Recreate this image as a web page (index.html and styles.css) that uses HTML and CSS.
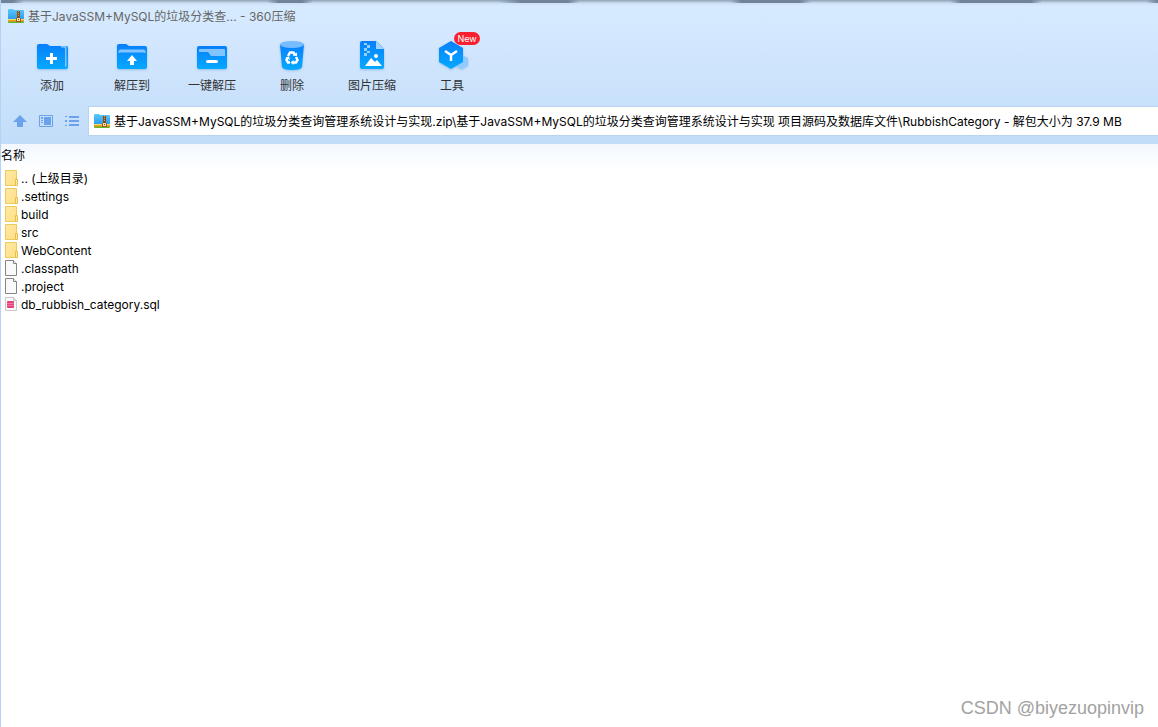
FILE: index.html
```html
<!DOCTYPE html>
<html lang="zh-CN">
<head>
<meta charset="utf-8">
<meta name="viewport" content="width=device-width, initial-scale=1">
<title>360压缩</title>
<link rel="stylesheet" href="styles.css">
</head>
<body>
<svg class="defs" aria-hidden="true">
  <defs>
    <linearGradient id="blue" x1="0" y1="0" x2="0" y2="1"><stop offset="0" stop-color="#087ffb"/><stop offset="1" stop-color="#05a9ff"/></linearGradient>
    <linearGradient id="sheet" x1="0" y1="0" x2="1" y2="1"><stop offset="0" stop-color="#ffe9a4"/><stop offset="1" stop-color="#ffdf85"/></linearGradient>
    <linearGradient id="zipblue" x1="0" y1="0" x2="0" y2="1"><stop offset="0" stop-color="#5cc8fa"/><stop offset="1" stop-color="#279bed"/></linearGradient>
  </defs>
  <symbol id="zip" viewBox="0 0 16 14">
    <path d="M0 1q0-1 1-1h4l1 1h9q1 0 1 1v9H0z" fill="url(#zipblue)"/>
    <path d="M0 10h16v1H0z" fill="#f0dc70"/><path d="M0 11h16v2H0z" fill="#f59a1d"/><path d="M0 12.500h16V13q0 1-1 1H1q-1 0-1-1z" fill="#63b52e"/>
    <path d="M9 2h3v8H9z" fill="#8a4b1a"/><path d="M10 2h1v1h-1zm0 2h1v1h-1zm0 2h1v1h-1z" fill="#e0a050"/>
    <path d="M8 9h5v4H8z" fill="#9a5a20"/><path d="M9 9h3v3H9z" fill="#ffe6a0"/><path d="M10 10h1v1h-1z" fill="#74451c"/>
  </symbol>
  <symbol id="folder" viewBox="0 1 14 18">
    <path d="M1.500 1.500h11v15h-11z" fill="url(#sheet)" stroke="#eccb58"/>
    <path d="M11.500 10.500h2v6h-2z" fill="#ffe9a4" stroke="#e6c04a"/>
  </symbol>
  <symbol id="file" viewBox="0 1 14 18">
    <path d="M1.500 1.500h8l3 3v12h-11z" fill="#fafafa" stroke="#858585"/><path d="M9.500 1.500v3h3" fill="#fff" stroke="#858585"/>
  </symbol>
</svg>
<div class="window">
  <header class="chrome">
    <div class="shadows" aria-hidden="true"></div>
    <div class="titlebar">
      <svg class="zip"><use href="#zip"/></svg>
      <h1>基于JavaSSM+MySQL的垃圾分类查... - 360压缩</h1>
    </div>
    <nav class="toolbar" aria-label="工具栏">
      <button class="tool"><svg viewBox="0 0 32 32"><path d="M1 6q0-2 2-2h8l3 2h16q2 0 2 2v19q0 2-2 2H3q-2 0-2-2z" fill="url(#blue)"/><path d="M25 6h4q1.500 0 1.500 1.500V26q0 1-1.500 1V9q0-1.500-1.500-1.500H25z" fill="#82c4ff"/><path d="M10 18.500h11M15.500 13v11" stroke="#fff" stroke-width="3"/></svg>添加</button>
      <button class="tool"><svg viewBox="0 0 32 32"><path d="M1 6q0-2 2-2h7l3 2h16q2 0 2 2v19q0 2-2 2H3q-2 0-2-2z" fill="url(#blue)"/><path d="M3 13v-2q0-1 1-1h24q1 0 1 1v2q0-1-1-1H4q-1 0-1 1z" fill="#82c4ff" stroke="#82c4ff"/><path d="M16 15l5 6h-3v4h-4v-4h-3z" fill="#fff"/></svg>解压到</button>
      <button class="tool"><svg viewBox="0 0 32 32"><rect x="1" y="6" width="30" height="23" rx="2" fill="url(#blue)"/><path d="M3 12v-2q0-1 1-1h24q1 0 1 1v6H15l-3-4z" fill="#82c4ff"/><path d="M11.500 21.500h9" stroke="#fff" stroke-width="3" stroke-linecap="round"/></svg>一键解压</button>
      <button class="tool"><svg viewBox="0 0 32 32"><path d="M4 4h24l-2 23q-1 3-10 3T6 27z" fill="url(#blue)"/><ellipse cx="16" cy="4.500" rx="12" ry="3.500" fill="#76bcff"/><g fill="none" stroke="#fff" stroke-width="2.500"><path d="M12 16l2-3.500h3.500l1.500 2.500M20 17l1.500 3-1.500 2.500h-3M14 22.500h-2L10.500 20l1-2.500"/></g><path d="M16.500 15.500l4.500.5V12.500zM17.500 20v5l-3-2.500zM9.500 17.500l3.500-1 1 3.500z" fill="#fff"/></svg>删除</button>
      <button class="tool"><svg viewBox="0 0 32 32"><path d="M6 1h14l8 8v18q0 2-2 2H6q-2 0-2-2V3q0-2 2-2z" fill="url(#blue)"/><path d="M20 1l8 8h-8z" fill="#a2d3ff"/><path d="M8 3h3v2H8zm3 2h3v3h-3zM8 8h3v3H8zm3 3h3v2h-3zM8 13h3v3H8z" fill="#93cfff"/><path d="M9 26l6-8 4 4 2-2 5 6z" fill="#fff"/><circle cx="20" cy="16" r="2" fill="#fff"/></svg>图片压缩</button>
      <button class="tool"><svg viewBox="0 0 32 32"><path d="M26 15l6 3v7l-6 4-6-3z" fill="#91caff"/><path d="M15 1l12 7v14l-12 7-12-7V8z" fill="url(#blue)"/><path d="M9 11l6 4 6-4M15 15v6" fill="none" stroke="#fff" stroke-width="2.500"/></svg>工具<span class="badge">New</span></button>
    </nav>
    <div class="addressbar">
      <div class="views">
        <button aria-label="向上"><svg viewBox="0 0 16 16"><path d="M8 2l7 7h-4v5H5V9H1z" fill="#6ba2ec"/></svg></button>
        <button aria-label="详细视图"><svg viewBox="0 0 16 16"><path d="M1.500 2.500h13v11h-13z" fill="none" stroke="#6ba2ec"/><path d="M6 4h7v8H6zM3 4h2v2H3zm0 3h2v1H3zm0 2h2v1H3z" fill="#6ba2ec"/></svg></button>
        <button aria-label="列表视图"><svg viewBox="0 0 16 16"><path d="M1 3h2v1H1zm4 0h10v2H5zM1 7h2v2H1zm4 0h10v2H5zM1 12h2v1H1zm4-1h10v2H5z" fill="#6ba2ec"/></svg></button>
      </div>
      <label class="address"><svg class="zip"><use href="#zip"/></svg><input type="text" aria-label="路径" value="基于JavaSSM+MySQL的垃圾分类查询管理系统设计与实现.zip\基于JavaSSM+MySQL的垃圾分类查询管理系统设计与实现 项目源码及数据库文件\RubbishCategory - 解包大小为 37.9 MB"></label>
    </div>
  </header>
  <main>
    <table class="files">
      <thead><tr><th scope="col">名称</th></tr></thead>
      <tbody>
        <tr><td><span class="entry"><svg><use href="#folder"/></svg>.. (上级目录)</span></td></tr>
        <tr><td><span class="entry"><svg><use href="#folder"/></svg>.settings</span></td></tr>
        <tr><td><span class="entry"><svg><use href="#folder"/></svg>build</span></td></tr>
        <tr><td><span class="entry"><svg><use href="#folder"/></svg>src</span></td></tr>
        <tr><td><span class="entry"><svg><use href="#folder"/></svg>WebContent</span></td></tr>
        <tr><td><span class="entry"><svg><use href="#file"/></svg>.classpath</span></td></tr>
        <tr><td><span class="entry"><svg><use href="#file"/></svg>.project</span></td></tr>
        <tr><td><span class="entry"><svg viewBox="0 1 14 18"><path d="M1.500 2.500h8l3 3v10h-11z" fill="#fafafa" stroke="#c9c9c9"/><path d="M9.500 2.500v3h3" fill="#ddd" stroke="#c9c9c9"/><rect x="3" y="6" width="7" height="7" rx="1" fill="#e5417b"/><path d="M3 8.500h7M3 10.500h7" stroke="#ee7ba2"/></svg>db_rubbish_category.sql</span></td></tr>
      </tbody>
    </table>
  </main>
  <div class="watermark">CSDN @biyezuopinvip</div>
</div>
</body>
</html>
```
FILE: styles.css
```css
* { box-sizing: border-box; }
body { margin: 0; background: #fff; color: #000; font: 12px/18px Inter, "Noto Sans CJK SC", sans-serif; }
button, input { font: inherit; border: 0; padding: 0; margin: 0; background: none; color: inherit; }
svg { display: block; flex: none; }
.defs { position: absolute; width: 0; height: 0; }
.window { position: relative; min-height: 100vh; border-left: 1px solid #b4d2f5; }
.chrome { position: relative; padding-bottom: 8px; background: linear-gradient(#d7ebff, #d3e7fe 40px, #c2ddf9); }
.shadows {
  position: absolute; inset: 0 0 auto; height: 6px;
  background: linear-gradient(#8fa3b5, #b3c7d8 2px, rgba(190, 211, 230, .5) 3px, transparent);
}
.shadows::after {
  content: ""; position: absolute; inset: 0 0 auto; height: 3px;
  background: linear-gradient(90deg, #708399 1%, transparent 2% 23%, #708399 24% 26%, transparent 27% 43%, #708399 45% 49%, transparent 50% 63%, #708399 64% 69%, transparent 70% 82%, #708399 83% 89%, transparent 90% 99%, #708399);
}
.titlebar { display: flex; align-items: center; gap: 4px; height: 32px; padding-left: 7px; }
.titlebar h1 { margin: 0; padding-top: 2px; font-size: 12px; font-weight: 400; color: #666; }
.zip { width: 16px; height: 14px; }
.toolbar { display: flex; height: 74px; padding: 8px 0 0 11px; }
.tool { position: relative; display: flex; flex-direction: column; align-items: center; gap: 6px; width: 80px; height: 54px; color: #333; line-height: 16px; }
.tool svg { width: 32px; height: 32px; filter: drop-shadow(0 1px 1px #94bfe9); }
.badge { position: absolute; top: -8px; left: 42px; width: 26px; height: 13px; border-radius: 7px; background: #f8202e; color: #fff; font-size: 9px; line-height: 13px; text-align: center; }
.addressbar { display: flex; align-items: center; height: 30px; }
.views { display: flex; gap: 10px; width: 87px; padding-left: 11px; }
.views svg { width: 16px; height: 16px; }
.address { flex: 1; min-width: 0; display: flex; align-items: center; gap: 4px; height: 30px; padding-left: 5px; background: #fff; border: 1px solid #b9d4f2; border-right: 0; }
.address input { flex: 1; min-width: 0; padding-top: 2px; outline: 0; }
.files { width: 100%; border-collapse: collapse; }
.files th { height: 26px; padding: 0 0 2px; font-weight: 400; text-align: left; background: linear-gradient(#f2f8fe, #fff); }
.files td { padding: 0; }
.entry { display: flex; align-items: center; gap: 3px; height: 18px; padding-left: 3px; }
.entry svg { width: 14px; height: 18px; }
.watermark { position: absolute; right: 14px; bottom: 8px; color: #a2a2a2; font: 18px/22px "Liberation Sans", Arial, sans-serif; }
```
